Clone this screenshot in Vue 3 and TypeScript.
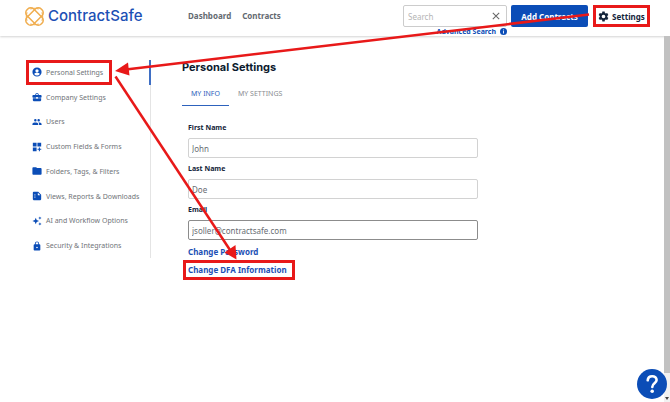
<script setup lang="ts">
import { ref } from 'vue'

interface NavItem {
  label: string
  path: string
}

const navItems: NavItem[] = [
  {
    label: 'Personal Settings',
    path: 'M12 1a11 11 0 1 0 0 22 11 11 0 0 0 0-22zm0 4.200a4 4 0 1 1 0 8 4 4 0 0 1 0-8zm0 15.200a8.200 8.200 0 0 1-6.800-3.600c.1-2.100 4.500-3.200 6.800-3.200s6.700 1.100 6.800 3.200a8.200 8.200 0 0 1-6.800 3.600z',
  },
  {
    label: 'Company Settings',
    path: 'M10 16v-1H2v5c0 1.200.9 2 2 2h16c1.100 0 2-.8 2-2v-5h-8v1zM21 7h-5V5l-2-2h-4L8 5v2H3c-1.100 0-2 .9-2 2v3c0 1.200.9 2 2 2h7v-2h4v2h7c1.100 0 2-.9 2-2V9c0-1.100-.9-2-2-2zm-7 0h-4V5h4z',
  },
  {
    label: 'Users',
    path: 'M16 11a3 3 0 1 0 0-6 3 3 0 0 0 0 6zm-8 0a3 3 0 1 0 0-6 3 3 0 0 0 0 6zm0 2c-2.300 0-7 1.200-7 3.500V19h14v-2.500C15 14.200 10.300 13 8 13zm8 0h-1c1.200.8 2 2 2 3.500V19h6v-2.500c0-2.300-4.700-3.500-7-3.500z',
  },
  {
    label: 'Custom Fields & Forms',
    path: 'M2 2h9v9H2zM13 2h9v9h-9zM2 13h9v9H2zM16.500 13h2.500v3.200h3.200v2.600H19V22h-2.500v-3.200h-3.200v-2.600h3.200z',
  },
  {
    label: 'Folders, Tags, & Filters',
    path: 'M10 3H3C1.900 3 1 3.900 1 5v14c0 1.100.9 2 2 2h18c1.100 0 2-.9 2-2V7c0-1.100-.9-2-2-2h-9z',
  },
  {
    label: 'Views, Reports & Downloads',
    path: 'M4 2C2.900 2 2 2.900 2 4v16c0 1.100.9 2 2 2h16c1.100 0 2-.9 2-2V9l-7-7zm10 2 6 6h-6zM6 7h2v2H6zm0 4h2v2H6zm0 4h2v2H6z',
  },
  {
    label: 'AI and Workflow Options',
    path: 'M9 4l2.300 5.700L17 12l-5.700 2.300L9 20l-2.300-5.700L1 12l5.700-2.300zM19 1l1.200 2.800L23 5l-2.800 1.200L19 9l-1.200-2.800L15 5l2.800-1.200zM19 15l1.200 2.800L23 19l-2.800 1.200L19 23l-1.200-2.800L15 19l2.800-1.200z',
  },
  {
    label: 'Security & Integrations',
    path: 'M18 8h-1V6A5 5 0 0 0 7 6v2H6c-1.100 0-2 .9-2 2v11c0 1.100.9 2 2 2h12c1.100 0 2-.9 2-2V10c0-1.100-.9-2-2-2zm-6 9.500a2 2 0 1 1 0-4 2 2 0 0 1 0 4zM15 8H9V6a3 3 0 0 1 6 0z',
  },
]

const search = ref('')
const firstName = ref('John')
const lastName = ref('Doe')
const email = ref('jsoller@contractsafe.com')
const activeNav = ref(0)
const activeTab = ref('MY INFO')
const tabs = ['MY INFO', 'MY SETTINGS']
</script>

<template>
  <div class="page">
    <header class="topbar">
      <a class="brand" href="#">
        <svg class="brand-mark" viewBox="0 0 36 36" fill="none" stroke="#f0ae50" aria-hidden="true">
          <rect x="-1" y="9" width="38" height="18" rx="8" transform="rotate(45 18 18)" stroke-width="3" />
          <rect x="-1" y="9" width="38" height="18" rx="8" transform="rotate(-45 18 18)" stroke-width="3" />
          <path d="M10 4q8-3 16 0M10 32q8 3 16 0M4 10q-3 8 0 16M32 10q3 8 0 16" stroke-width="2" />
        </svg>
        <span>ContractSafe</span>
      </a>
      <nav class="links">
        <a href="#">Dashboard</a>
        <a href="#">Contracts</a>
      </nav>
      <div class="search">
        <div class="search-box">
          <input v-model="search" type="text" placeholder="Search" aria-label="Search" />
          <button class="clear" type="button" aria-label="Clear search" @click="search = ''">
            <svg viewBox="0 0 10 10" aria-hidden="true"><path d="M1 1l8 8M9 1L1 9" stroke="#666" stroke-width="1.300" /></svg>
          </button>
        </div>
        <a class="advanced" href="#">
          Advanced Search
          <svg viewBox="0 0 12 12" aria-hidden="true">
            <circle cx="6" cy="6" r="6" fill="#0b4db7" />
            <path d="M6 2.500v1.600M6 5v4.500" stroke="#fff" stroke-width="1.500" />
          </svg>
        </a>
      </div>
      <button class="add" type="button">Add Contracts</button>
      <button class="settings marked" type="button">
        <svg viewBox="0 0 24 24" fill="#13243a" aria-hidden="true">
          <path fill-rule="evenodd" d="M9.500 1h5l.6 3.100 2 1.200 3-1.100 2.500 4.300-2.400 2.200v2.600l2.400 2.200-2.500 4.300-3-1.100-2 1.200-.6 3.100h-5l-.6-3.100-2-1.200-3 1.100-2.500-4.300 2.400-2.200v-2.600L1.400 8.500l2.500-4.300 3 1.100 2-1.200zM12 8a4 4 0 1 0 0 8 4 4 0 0 0 0-8z" />
        </svg>
        Settings
      </button>
    </header>

    <div class="body">
      <nav class="sidebar" aria-label="Settings sections">
        <a
          v-for="(item, i) in navItems"
          :key="item.label"
          href="#"
          :class="{ active: i === activeNav }"
          @click.prevent="activeNav = i"
        >
          <svg viewBox="0 0 24 24" aria-hidden="true">
            <path :d="item.path" fill="#0b4db7" fill-rule="evenodd" />
          </svg>
          <span>{{ item.label }}</span>
        </a>
      </nav>

      <main class="content">
        <h1>Personal Settings</h1>
        <div class="tabs" role="tablist">
          <button
            v-for="tab in tabs"
            :key="tab"
            type="button"
            role="tab"
            :aria-selected="tab === activeTab"
            :class="{ active: tab === activeTab }"
            @click="activeTab = tab"
          >
            {{ tab }}
          </button>
        </div>
        <form class="form" @submit.prevent>
          <label for="first">First Name</label>
          <input id="first" v-model="firstName" type="text" />
          <label for="last">Last Name</label>
          <input id="last" v-model="lastName" type="text" />
          <label for="email">Email</label>
          <input id="email" v-model="email" class="dark" type="text" />
          <a href="#">Change Password</a>
          <a class="dfa marked" href="#">Change DFA Information</a>
        </form>
      </main>

      <div class="scrollbar" aria-hidden="true">
        <div class="thumb"></div>
        <svg viewBox="0 0 6 8"><path d="M1 3h4L3 6z" fill="#444" /></svg>
      </div>
    </div>

    <button class="help" type="button" aria-label="Help">
      <svg viewBox="0 0 30 30" fill="none" aria-hidden="true">
        <path d="M10.700 11.300c.2-2.600 2-4.100 4.500-4.100 2.600 0 4.400 1.600 4.400 3.900 0 3.200-4.300 3.300-4.300 6.800" stroke="#fff" stroke-width="2.600" stroke-linecap="round" />
        <circle cx="15.200" cy="22.300" r="1.800" fill="#fff" />
      </svg>
    </button>

    <svg class="arrows" width="670" height="402" viewBox="0 0 670 402" aria-hidden="true">
      <g stroke="#e81919" stroke-width="2.500" fill="none">
        <path d="M589 14.500L126 69.500" />
        <path d="M115.500 76.500L230 250" />
      </g>
      <g fill="#e81919">
        <path d="M115 71L128 62.500L129.500 75.500Z" />
        <path d="M236.500 259.500L224.500 252.500L235.500 245Z" />
      </g>
    </svg>
  </div>
</template>

<style>
body {
  margin: 0;
  background: #fff;
}
</style>

<style scoped>
.page {
  position: relative;
  display: flex;
  flex-direction: column;
  min-height: 100vh;
  overflow: hidden;
  font-family: 'Noto Sans', 'Open Sans', sans-serif;
  font-size: 7px;
  color: #13243a;
}
.page * {
  box-sizing: border-box;
}
a {
  color: inherit;
  text-decoration: none;
}
button,
input {
  font: inherit;
  color: inherit;
  margin: 0;
}
button {
  padding: 0;
  border: 0;
  background: none;
  cursor: pointer;
}
svg {
  flex-shrink: 0;
}
.topbar {
  display: flex;
  align-items: flex-start;
  height: 36px;
  padding: 5px 20px 0 25px;
  box-shadow: 0 1px 2px #d4d4d4;
}
.brand {
  display: flex;
  align-items: center;
  gap: 4px;
  width: 163px;
  height: 22px;
  font: 500 15px/22px Inter, sans-serif;
  color: #1c50b5;
}
.brand-mark {
  width: 19px;
  height: 19px;
}
.links {
  display: flex;
  flex: 1;
  gap: 11px;
  font-size: 8px;
  font-weight: 700;
  line-height: 22px;
  color: #636970;
}
.search {
  display: flex;
  flex-direction: column;
  width: 104px;
  margin-right: 4px;
}
.search-box {
  display: flex;
  align-items: center;
  height: 22px;
  padding: 0 6px 0 4px;
  border: 1px solid #ccc;
  border-radius: 2px;
}
.search-box input {
  flex: 1;
  min-width: 0;
  padding: 0;
  border: 0;
  outline: 0;
  font-size: 8px;
  background: none;
}
.search-box input::placeholder {
  color: #b5b5b5;
}
.clear {
  display: flex;
}
.clear svg {
  width: 8px;
  height: 8px;
}
.advanced {
  display: flex;
  align-items: center;
  align-self: flex-end;
  gap: 4px;
  line-height: 9px;
  font-weight: 700;
  color: #0b4db7;
  white-space: nowrap;
}
.advanced svg {
  width: 7px;
  height: 7px;
}
.add {
  width: 77px;
  height: 22px;
  margin-right: 5px;
  border-radius: 2px;
  background: #0b4db7;
  color: #fff;
  font-size: 8px;
  font-weight: 700;
}
.marked {
  border: 3px solid #e81919;
}
.settings {
  display: flex;
  align-items: center;
  justify-content: center;
  gap: 3px;
  width: 57px;
  height: 22px;
  font-size: 8px;
  font-weight: 700;
}
.settings svg {
  width: 11px;
  height: 11px;
}
.body {
  display: flex;
  flex: 1;
}
.sidebar {
  display: flex;
  flex-direction: column;
  align-self: flex-start;
  width: 125px;
  height: 198px;
  margin: 24px 31px 0 26px;
  border-right: 1px solid #e4e4e4;
  color: #707479;
}
.sidebar a {
  display: flex;
  flex: 1;
  align-items: center;
  gap: 4px;
  padding-left: 6px;
  white-space: nowrap;
}
.sidebar a.active {
  position: relative;
  margin-right: -1px;
  border-right: 2px solid #3f6fc4;
}
.sidebar a.active::before {
  content: '';
  position: absolute;
  inset: 0 37px 0 0;
  border: 3px solid #e81919;
}
.sidebar svg {
  width: 10px;
  height: 10px;
}
.content {
  flex: 1;
  padding-top: 23px;
}
h1 {
  margin: 0;
  font: 700 11px/16px Inter, sans-serif;
  color: #0c1b2e;
}
.tabs {
  display: flex;
  margin-top: 7px;
}
.tabs button {
  height: 24px;
  padding: 0 9px;
  border-bottom: 1px solid transparent;
  color: #8a8d91;
}
.tabs button.active {
  border-color: #2d62bd;
  color: #2d62bd;
}
.form {
  display: flex;
  flex-direction: column;
  align-items: flex-start;
  padding: 15px 0 0 6px;
}
.form label {
  height: 17px;
  line-height: 14px;
  font-weight: 700;
}
.form input {
  width: 61%;
  min-width: 290px;
  height: 20px;
  margin-bottom: 4px;
  padding: 0 3px;
  border: 1px solid #d2d2d2;
  border-radius: 2px;
  background: #fff;
  color: #686d73;
  font-size: 8px;
}
.form input.dark {
  border-color: #8c8c8c;
}
.form a {
  line-height: 16px;
  font-size: 8px;
  font-weight: 700;
  color: #1c50b5;
}
.form .dfa {
  margin-left: -5px;
  padding: 0 5px 0 2px;
  line-height: 14px;
}
.scrollbar {
  display: flex;
  flex-direction: column;
  width: 6px;
  background: #f1f1f1;
}
.thumb {
  flex: 1;
  background: #c1c1c1;
}
.scrollbar svg {
  width: 6px;
  height: 8px;
  margin-top: 21px;
}
.help {
  position: absolute;
  right: 3px;
  bottom: 3px;
  width: 30px;
  height: 30px;
  border-radius: 50%;
  background: #0b4db7;
}
.help svg {
  display: block;
  width: 30px;
  height: 30px;
}
.arrows {
  position: absolute;
  top: 0;
  left: 0;
  pointer-events: none;
}
</style>
